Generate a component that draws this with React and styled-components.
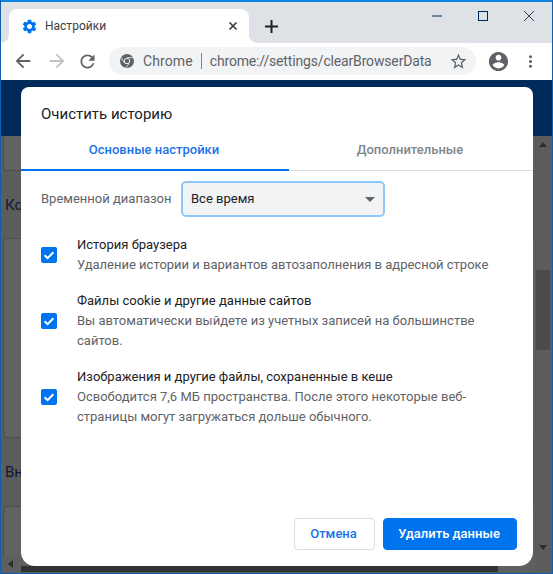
import React from 'react';
import styled, { createGlobalStyle } from 'styled-components';

const Global = createGlobalStyle`
  html, body { margin: 0; padding: 0; background: #0b5aa8; }
  * { box-sizing: border-box; }
`;

const Window = styled.div`
  position: relative;
  width: 553px;
  height: 574px;
  display: flex;
  flex-direction: column;
  overflow: hidden;
  border: solid #0f5fae;
  border-width: 0 1px 1px 1px;
  font-family: Roboto, "Noto Sans", sans-serif;
`;
const TitleLine = styled.div`
  height: 2px;
  margin: 0 -1px;
  flex: none;
  background: #0a84e0;
`;
const TabStrip = styled.div`
  height: 41px;
  flex: none;
  display: flex;
  align-items: flex-end;
  padding-left: 8px;
  background: #dee1e6;
`;
const Tab = styled.div`
  position: relative;
  width: 240px;
  height: 34px;
  display: flex;
  align-items: center;
  padding: 0 11px 0 12px;
  gap: 7px;
  background: #fff;
  border-radius: 8px 8px 0 0;
  &::before, &::after {
    content: '';
    position: absolute;
    bottom: 0;
    width: 8px;
    height: 8px;
    background: radial-gradient(circle at var(--cx) 0, #dee1e6 7.5px, #fff 8px);
  }
  &::before { left: -8px; --cx: 0; }
  &::after { right: -8px; --cx: 100%; }
`;
const TabTitle = styled.span`
  flex: 1;
  font-size: 12px;
  color: #3c4043;
`;
const NewTab = styled.div`
  width: 28px;
  height: 34px;
  margin-left: 8px;
  display: flex;
  align-items: center;
  justify-content: center;
`;
const WindowControls = styled.div`
  margin-left: auto;
  align-self: flex-start;
  display: flex;
  padding-top: 6px;
`;
const WinButton = styled.div`
  width: 46px;
  height: 16px;
  display: flex;
  align-items: center;
  justify-content: center;
`;
const Toolbar = styled.div`
  height: 37px;
  flex: none;
  display: flex;
  align-items: center;
  padding: 0 0 1px 0;
  background: #fff;
`;
const NavButton = styled.div`
  width: ${p => p.$w || 34}px;
  height: 28px;
  display: flex;
  align-items: center;
  justify-content: center;
  flex: none;
`;
const Omnibox = styled.div`
  width: 367px;
  height: 28px;
  margin-left: 4px;
  display: flex;
  align-items: center;
  padding: 0 8px 0 11px;
  background: #f1f3f4;
  border-radius: 14px;
  font-size: 14px;
  color: #5f6368;
  white-space: nowrap;
`;
const Origin = styled.span`
  margin-left: 9px;
  letter-spacing: .1px;
`;
const Divider = styled.span`
  width: 1px;
  height: 16px;
  margin: 0 8px 0 8px;
  background: #80868b;
`;
const Url = styled.span`
  flex: 1;
  letter-spacing: -.16px;
`;
const Page = styled.div`
  flex: 1;
  display: flex;
  flex-direction: column;
  min-height: 0;
`;
const PageHeader = styled.div`
  height: 56px;
  flex: none;
  background: #002a5a;
`;
const Body = styled.div`
  flex: 1;
  display: flex;
  min-height: 0;
  background: #5c5c5c;
`;
const Content = styled.div`
  flex: 1;
  display: flex;
  flex-direction: column;
  min-width: 0;
  padding-left: 2px;
`;
const Card = styled.div`
  height: ${p => p.$h}px;
  flex: none;
  background: #626262;
  border: 1px solid #4e4e4e;
  border-width: ${p => p.$open === 'top' ? '0 0 1px 1px' : p.$open === 'bottom' ? '1px 0 0 1px' : '1px 0 1px 1px'};
  border-radius: ${p => p.$open === 'top' ? '0 0 0 4px' : p.$open === 'bottom' ? '4px 0 0 0' : '4px 0 0 4px'};
`;
const SectionLabel = styled.div`
  height: ${p => p.$h}px;
  flex: none;
  display: flex;
  align-items: center;
  padding-left: 2px;
  font-size: 15px;
  color: #0c1a35;
  white-space: nowrap;
`;
const HScroll = styled.div`
  height: 16px;
  flex: none;
  display: flex;
  align-items: center;
  padding-left: 5px;
  background: #5f5f5f;
`;
const VScroll = styled.div`
  width: 18px;
  flex: none;
  display: flex;
  flex-direction: column;
  align-items: center;
  justify-content: flex-start;
  padding-top: 6px;
  background: #5c5c5c;
`;
const ThumbV = styled.div`
  width: 14px;
  height: 80px;
  margin: 123px 0 195px 0;
  background: #4c4a4a;
`;
const ArrowUp = styled.div`
  width: 0; height: 0;
  border: 4px solid transparent;
  border-top: 0;
  border-bottom: 5px solid #2e2e2e;
`;
const ArrowDown = styled.div`
  width: 0; height: 0;
  border: 4px solid transparent;
  border-bottom: 0;
  border-top: 5px solid #2e2e2e;
`;
const ArrowLeft = styled.div`
  width: 0; height: 0;
  border: 4px solid transparent;
  border-left: 0;
  border-right: 5px solid #2e2e2e;
`;

const BottomBar = styled.div`
  position: absolute;
  left: 20px;
  top: 566px;
  width: 477px;
  height: 6px;
  background: #333;
`;
const Dialog = styled.div`
  position: absolute;
  left: 20px;
  top: 87px;
  width: 512px;
  height: 479px;
  display: flex;
  flex-direction: column;
  background: #fff;
  border-radius: 8px;
  border-bottom-left-radius: 14px;
  border-bottom-right-radius: 14px;
`;
const DialogTitle = styled.h2`
  margin: 0;
  height: 54px;
  flex: none;
  padding: 17px 20px 0;
  font-weight: 400;
  font-size: 15px;
  line-height: 20px;
  color: #202124;
`;
const Tabs = styled.div`
  height: 30px;
  flex: none;
  display: flex;
  border-bottom: 1px solid #dadce0;
`;
const DialogTab = styled.div`
  width: ${p => p.$active ? 268 : 244}px;
  height: 30px;
  padding: 1px 2px 0 0;
  text-align: center;
  font-size: 13px;
  font-weight: 500;
  line-height: 16px;
  color: ${p => p.$active ? '#1a73e8' : '#80868b'};
  border-bottom: ${p => p.$active ? '2px solid #0073ee' : '0'};
`;
const RangeRow = styled.div`
  display: flex;
  align-items: center;
  height: 36px;
  margin-top: 10px;
  padding-left: 20px;
  font-size: 13px;
  color: #5f6368;
  flex: none;
`;
const RangeLabel = styled.span`
  width: 140px;
  padding-bottom: 2px;
`;
const Select = styled.div`
  width: 204px;
  height: 36px;
  display: flex;
  align-items: center;
  justify-content: space-between;
  padding: 0 8px 2px 8px;
  background: #f1f3f4;
  border: 2px solid #8fc7fb;
  border-radius: 5px;
  color: #202124;
  font-size: 13px;
`;
const Caret = styled.span`
  width: 0; height: 0;
  margin-top: 2px;
  border: 5px solid transparent;
  border-bottom: 0;
  border-top: 5px solid #5f6368;
`;
const Options = styled.div`
  display: flex;
  flex-direction: column;
  gap: 16px;
  margin-top: 18px;
  flex: 1;
  padding: 0 20px;
`;
const Option = styled.div`
  display: flex;
  align-items: center;
  gap: 20px;
`;
const Checkbox = styled.div`
  width: 16px;
  height: 16px;
  flex: none;
  display: flex;
  align-items: center;
  justify-content: center;
  background: #0073ee;
  border-radius: 2px;
`;
const OptionText = styled.div`
  font-size: 13px;
  line-height: 20px;
`;
const OptionTitle = styled.div`
  color: #202124;
`;
const OptionDesc = styled.div`
  color: #5f6368;
`;
const Footer = styled.div`
  display: flex;
  justify-content: flex-end;
  gap: 8px;
  padding: 0 16px 16px 0;
  flex: none;
`;
const Button = styled.div`
  width: ${p => p.$w}px;
  height: 32px;
  display: flex;
  align-items: center;
  justify-content: center;
  padding: 0 2px 2px 0;
  border-radius: 4px;
  font-size: 13px;
  font-weight: 500;
  background: ${p => p.$primary ? '#0073ee' : '#fff'};
  color: ${p => p.$primary ? '#fff' : '#1a73e8'};
  border: 1px solid ${p => p.$primary ? '#0073ee' : '#dadce0'};
`;

const Icon = ({ d, size = 24, fill = '#5f6368' }) => (
  <svg width={size} height={size} viewBox="0 0 24 24" fill={fill}><path d={d} /></svg>
);

const P = {
  gear: 'M19.14 12.94c.04-.3.06-.61.06-.94 0-.32-.02-.64-.07-.94l2.03-1.58c.18-.14.23-.41.12-.61l-1.92-3.32c-.12-.22-.37-.29-.59-.22l-2.39.96c-.5-.38-1.03-.7-1.62-.94l-.36-2.54c-.04-.24-.24-.41-.48-.41h-3.84c-.24 0-.43.17-.47.41l-.36 2.54c-.59.24-1.13.57-1.62.94l-2.39-.96c-.22-.08-.47 0-.59.22L2.74 8.87c-.12.21-.08.47.12.61l2.03 1.58c-.05.3-.09.63-.09.94s.02.64.07.94l-2.03 1.58c-.18.14-.23.41-.12.61l1.92 3.32c.12.22.37.29.59.22l2.39-.96c.5.38 1.03.7 1.62.94l.36 2.54c.05.24.24.41.48.41h3.84c.24 0 .44-.17.47-.41l.36-2.54c.59-.24 1.13-.56 1.62-.94l2.39.96c.22.08.47 0 .59-.22l1.92-3.32c.12-.22.07-.47-.12-.61l-2.01-1.58zM12 15.6c-1.98 0-3.6-1.62-3.6-3.6s1.62-3.6 3.6-3.6 3.6 1.62 3.6 3.6-1.62 3.6-3.6 3.6z',
  back: 'M20 11H7.83l5.59-5.59L12 4l-8 8 8 8 1.41-1.41L7.83 13H20v-2z',
  fwd: 'M4 11h12.17l-5.59-5.59L12 4l8 8-8 8-1.41-1.41L16.17 13H4v-2z',
  reload: 'M17.65 6.35C16.2 4.9 14.21 4 12 4c-4.42 0-7.99 3.58-7.99 8s3.57 8 7.99 8c3.73 0 6.84-2.55 7.73-6h-2.08c-.82 2.33-3.04 4-5.65 4-3.31 0-6-2.69-6-6s2.69-6 6-6c1.66 0 3.14.69 4.22 1.78L13 11h7V4l-2.35 2.35z',
  star: 'M22 9.24l-7.19-.62L12 2 9.19 8.63 2 9.24l5.46 4.73L5.82 21 12 17.27 18.18 21l-1.63-7.03L22 9.24zM12 15.4l-3.76 2.27 1-4.28-3.32-2.88 4.38-.38L12 6.1l1.71 4.04 4.38.38-3.32 2.88 1 4.28L12 15.4z',
  account: 'M12 2C6.48 2 2 6.48 2 12s4.48 10 10 10 10-4.48 10-10S17.52 2 12 2zm0 3c1.66 0 3 1.34 3 3s-1.34 3-3 3-3-1.34-3-3 1.34-3 3-3zm0 14.2c-2.5 0-4.71-1.28-6-3.22.03-1.99 4-3.08 6-3.08 1.99 0 5.97 1.09 6 3.08-1.29 1.94-3.5 3.22-6 3.22z',
  dots: 'M12 8c1.1 0 2-.9 2-2s-.9-2-2-2-2 .9-2 2 .9 2 2 2zm0 2c-1.1 0-2 .9-2 2s.9 2 2 2 2-.9 2-2-.9-2-2-2zm0 6c-1.1 0-2 .9-2 2s.9 2 2 2 2-.9 2-2-.9-2-2-2z',
};

const ChromeIcon = () => (
  <svg width="14" height="14" viewBox="0 0 14 14">
    <circle cx="7" cy="7" r="7" fill="#5f6368" />
    <circle cx="7" cy="7" r="3.1" fill="#f1f3f4" />
    <circle cx="7" cy="7" r="2.2" fill="#5f6368" />
    <path d="M7 3.6h6M4 8.6 1.2 3.6M8.7 10 5.8 13.8" stroke="#f1f3f4" strokeWidth=".8" fill="none" />
  </svg>
);
const CheckIcon = () => (
  <svg width="12" height="12" viewBox="0 0 12 12"><path d="M1.6 6.2 4.6 9.1 10.4 3.2" stroke="#fff" strokeWidth="2" fill="none" /></svg>
);

export default function App() {
  return (
    <Window>
      <Global />
      <TitleLine />
      <TabStrip>
        <Tab>
          <Icon d={P.gear} size={17} fill="#0073ee" />
          <TabTitle>Настройки</TabTitle>
          <svg width="10" height="10" viewBox="0 0 10 10"><path d="M1.5 1.5l7 7M8.5 1.5l-7 7" stroke="#3c4043" strokeWidth="1.7" /></svg>
        </Tab>
        <NewTab>
          <svg width="13" height="13" viewBox="0 0 13 13"><path d="M6.5 0v13M0 6.5h13" stroke="#202124" strokeWidth="2" /></svg>
        </NewTab>
        <WindowControls>
          <WinButton><svg width="10" height="2" viewBox="0 0 10 2"><path d="M0 1h10" stroke="#00285a" strokeWidth="1" /></svg></WinButton>
          <WinButton><svg width="10" height="10" viewBox="0 0 10 10"><rect x=".5" y=".5" width="9" height="9" fill="none" stroke="#00285a" /></svg></WinButton>
          <WinButton><svg width="10" height="10" viewBox="0 0 10 10"><path d="M0 0l10 10M10 0L0 10" stroke="#303b4d" /></svg></WinButton>
        </WindowControls>
      </TabStrip>
      <Toolbar>
        <NavButton $w={43}><Icon d={P.back} size={22} /></NavButton>
        <NavButton $w={25}><Icon d={P.fwd} size={22} fill="#bdc1c6" /></NavButton>
        <NavButton $w={36}><Icon d={P.reload} size={21} /></NavButton>
        <Omnibox>
          <ChromeIcon />
          <Origin>Chrome</Origin>
          <Divider />
          <Url>chrome://settings/clearBrowserData</Url>
          <Icon d={P.star} size={19} />
        </Omnibox>
        <NavButton $w={44}><Icon d={P.account} size={23} /></NavButton>
        <NavButton $w={20}><Icon d={P.dots} size={19} /></NavButton>
      </Toolbar>
      <Page>
        <PageHeader />
        <Body>
          <Content>
            <Card $h={35} $open="top" />
            <SectionLabel $h={67}>Ко</SectionLabel>
            <Card $h={200} />
            <SectionLabel $h={68}>Вн</SectionLabel>
            <Card $h={50} $open="bottom" />
            <HScroll><ArrowLeft /></HScroll>
          </Content>
          <VScroll>
            <ArrowUp />
            <ThumbV />
            <ArrowDown />
          </VScroll>
        </Body>
      </Page>
      <BottomBar />
      <Dialog>
        <DialogTitle>Очистить историю</DialogTitle>
        <Tabs>
          <DialogTab $active>Основные настройки</DialogTab>
          <DialogTab>Дополнительные</DialogTab>
        </Tabs>
        <RangeRow>
          <RangeLabel>Временной диапазон</RangeLabel>
          <Select>Все время<Caret /></Select>
        </RangeRow>
        <Options>
          <Option>
            <Checkbox><CheckIcon /></Checkbox>
            <OptionText>
              <OptionTitle>История браузера</OptionTitle>
              <OptionDesc>Удаление истории и вариантов автозаполнения в адресной строке</OptionDesc>
            </OptionText>
          </Option>
          <Option>
            <Checkbox><CheckIcon /></Checkbox>
            <OptionText>
              <OptionTitle>Файлы cookie и другие данные сайтов</OptionTitle>
              <OptionDesc>Вы автоматически выйдете из учетных записей на большинстве<br />сайтов.</OptionDesc>
            </OptionText>
          </Option>
          <Option>
            <Checkbox><CheckIcon /></Checkbox>
            <OptionText>
              <OptionTitle>Изображения и другие файлы, сохраненные в кеше</OptionTitle>
              <OptionDesc>Освободится 7,6 МБ пространства. После этого некоторые веб-<br />страницы могут загружаться дольше обычного.</OptionDesc>
            </OptionText>
          </Option>
        </Options>
        <Footer>
          <Button $w={81}>Отмена</Button>
          <Button $primary $w={134}>Удалить данные</Button>
        </Footer>
      </Dialog>
    </Window>
  );
}
